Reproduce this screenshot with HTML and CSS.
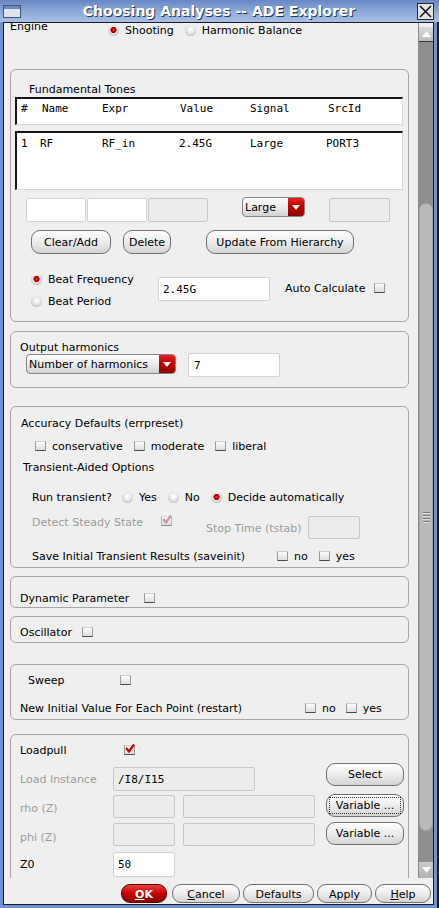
FILE: index.html
```html
<!DOCTYPE html>
<html lang="en">
<head>
<meta charset="utf-8">
<title>Choosing Analyses -- ADE Explorer</title>
<link rel="stylesheet" href="styles.css">
</head>
<body>
<div class="window">
  <header class="titlebar">
    <svg class="win-icon" width="18" height="13" viewBox="0 0 18 13"><rect x="0.5" y="0.5" width="17" height="12" fill="#dfe3ea" stroke="#46556f"/><rect x="1" y="1" width="16" height="3" fill="#6d8cc6"/></svg>
    <div class="title">Choosing Analyses -- ADE Explorer</div>
    <svg class="win-close" width="17" height="17" viewBox="0 0 17 17"><rect x="0.5" y="0.5" width="16" height="16" fill="#e2e2e2" stroke="#2a2a2a"/><path d="M3 3 L14 14 M14 3 L3 14" stroke="#111" stroke-width="1.5"/></svg>
  </header>
  <div class="frame"><div class="frame-inner"><div class="client">
    <div class="main">
      <div class="viewport">
        <div class="engine-row">
          <span class="engine-label">Engine</span>
          <span class="opt eng-opt"><span class="rb on"></span>Shooting</span>
          <span class="opt eng-opt gap11"><span class="rb"></span>Harmonic Balance</span>
        </div>

        <section class="box s1">
          <div class="tones-label">Fundamental Tones</div>
          <div class="tbl tbl-head"><div class="tr th"><span>#</span><span>Name</span><span>Expr</span><span>Value</span><span>Signal</span><span>SrcId</span></div></div>
          <div class="tbl tbl-body"><div class="tr td"><span>1</span><span>RF</span><span>RF_in</span><span>2.45G</span><span>Large</span><span>PORT3</span></div></div>
          <div class="field-row">
            <div class="in f1"></div><div class="in f2"></div><div class="in gray f3"></div>
            <div class="combo combo-large"><span class="combo-text">Large</span><span class="combo-btn"><svg width="8" height="5" viewBox="0 0 8 5"><path d="M0 0 H8 L4 5 Z" fill="#fff"/></svg></span></div>
            <div class="in gray f4"></div>
          </div>
          <div class="btn-row">
            <div class="btn b-clear">Clear/Add</div>
            <div class="btn b-delete">Delete</div>
            <div class="btn b-update">Update From Hierarchy</div>
          </div>
          <div class="beat">
            <div class="beat-opts">
              <div class="opt"><span class="rb on"></span>Beat Frequency</div>
              <div class="opt"><span class="rb"></span>Beat Period</div>
            </div>
            <div class="in mono beat-in">2.45G</div>
            <div class="opt auto"><span class="auto-label">Auto Calculate</span><span class="cb"></span></div>
          </div>
        </section>

        <section class="box s2">
          <div class="s2-label">Output harmonics</div>
          <div class="s2-row">
            <div class="combo combo-harm"><span class="combo-text">Number of harmonics</span><span class="combo-btn"><svg width="8" height="5" viewBox="0 0 8 5"><path d="M0 0 H8 L4 5 Z" fill="#fff"/></svg></span></div>
            <div class="in mono harm-in">7</div>
          </div>
        </section>

        <section class="box s3">
          <div class="line acc-label">Accuracy Defaults (errpreset)</div>
          <div class="line opt acc-row">
            <span class="cbl"><span class="cb"></span>conservative</span>
            <span class="cbl gap11"><span class="cb"></span>moderate</span>
            <span class="cbl gap11"><span class="cb"></span>liberal</span>
          </div>
          <div class="line tao-label">Transient-Aided Options</div>
          <div class="line opt run-row">
            <span class="run-label">Run transient?</span>
            <span class="opt"><span class="rb"></span>Yes</span>
            <span class="opt gap11"><span class="rb"></span>No</span>
            <span class="opt gap11"><span class="rb on"></span>Decide automatically</span>
          </div>
          <div class="detect-row">
            <span class="line dis-text detect-label">Detect Steady State</span>
            <span class="cb chk dis detect-cb"><svg width="11" height="10" viewBox="0 0 11 10"><path d="M2 4 L5 7.5 L10 0.5" fill="none" stroke="#c79a9a" stroke-width="2.2"/></svg></span>
            <span class="line dis-text stop-label">Stop Time (tstab)</span>
            <span class="in gray stop-in"></span>
          </div>
          <div class="line opt save-row">
            <span class="save-label">Save Initial Transient Results (saveinit)</span>
            <span class="cbl"><span class="cb"></span>no</span>
            <span class="cbl gap11"><span class="cb"></span>yes</span>
          </div>
        </section>

        <section class="box s4">
          <div class="line opt dyn-row"><span class="dyn-label">Dynamic Parameter</span><span class="cb"></span></div>
        </section>

        <section class="box s5">
          <div class="line opt osc-row"><span class="osc-label">Oscillator</span><span class="cb"></span></div>
        </section>

        <section class="box s6">
          <div class="line opt sweep-row"><span class="sweep-label">Sweep</span><span class="cb"></span></div>
          <div class="line opt restart-row">
            <span class="restart-label">New Initial Value For Each Point (restart)</span>
            <span class="cbl"><span class="cb"></span>no</span>
            <span class="cbl gap10"><span class="cb"></span>yes</span>
          </div>
        </section>

        <section class="box s7">
          <div class="line opt lp-head"><span class="lp-title">Loadpull</span><span class="cb chk"><svg width="11" height="10" viewBox="0 0 11 10"><path d="M2 4 L5 7.5 L10 0.5" fill="none" stroke="#cc0000" stroke-width="2.2"/></svg></span></div>
          <div class="lp-row r1">
            <span class="lp-label dis-text">Load Instance</span>
            <span class="in gray mono inst-in">/I8/I15</span>
            <div class="btn lp-btn sel-btn">Select</div>
          </div>
          <div class="lp-row r2">
            <span class="lp-label dis-text">rho (Z)</span>
            <span class="in gray small-in"></span>
            <span class="in gray wide-in"></span>
            <div class="btn lp-btn focus"><span>Variable ...</span></div>
          </div>
          <div class="lp-row r3">
            <span class="lp-label dis-text">phi (Z)</span>
            <span class="in gray small-in"></span>
            <span class="in gray wide-in"></span>
            <div class="btn lp-btn">Variable ...</div>
          </div>
          <div class="lp-row r4">
            <span class="lp-label">Z0</span>
            <span class="in mono z0-in">50</span>
          </div>
        </section>
      </div>
      <div class="scrollbar">
        <div class="sb-pad"></div>
        <div class="sb-up"><svg width="9" height="6" viewBox="0 0 9 6"><path d="M0 6 H9 L4.5 0 Z" fill="#fff"/></svg></div>
        <div class="sb-track">
          <div class="sb-thumb"><div class="grip"></div></div>
        </div>
        <div class="sb-down"><svg width="9" height="6" viewBox="0 0 9 6"><path d="M0 0 H9 L4.5 6 Z" fill="#fff"/></svg></div>
      </div>
    </div>
    <div class="buttonbar">
      <div class="btn bb ok"><span class="ul">O</span>K</div>
      <div class="btn bb cancel"><span class="ul">C</span>ancel</div>
      <div class="btn bb defaults">Defaults</div>
      <div class="btn bb apply">Apply</div>
      <div class="btn bb help"><span class="ul">H</span>elp</div>
    </div>
  </div></div></div>
</div>
</body>
</html>
```

FILE: styles.css
```css
* { box-sizing: border-box; }
html, body { margin: 0; padding: 0; }
body {
  font-family: "DejaVu Sans", "Liberation Sans", sans-serif;
  font-size: 11px;
  color: #000;
  background: #efefef;
}
.window {
  width: 439px;
  height: 908px;
  display: flex;
  flex-direction: column;
  overflow: hidden;
  background: #efefef;
}

/* title bar */
.titlebar {
  flex: none;
  height: 22px;
  display: flex;
  align-items: center;
  padding: 0 5px 0 3px;
  background: linear-gradient(#6886c2, #8ca8d8 50%, #a8bfe4);
}
.win-icon, .win-close { flex: none; display: block; }
.title {
  flex: 1;
  text-align: center;
  color: #fff;
  font-weight: bold;
  font-size: 14px;
  line-height: 22px;
  text-shadow: 1px 1px 0 #27375c;
  white-space: nowrap;
}

/* frame */
.frame {
  flex: 1;
  display: flex;
  min-height: 0;
  border-left: 3px solid #7093cf;
  border-right: 2px solid #1c1c1c;
}
.frame-inner {
  flex: 1;
  display: flex;
  min-width: 0;
  border-right: 3px solid #7093cf;
  border-bottom: 3px solid #7093cf;
}
.client {
  flex: 1;
  display: flex;
  flex-direction: column;
  min-width: 0;
  border: 1px solid #1c1c1c;
  background: #efefef;
}
.main { flex: none; height: 855px; display: flex; }
.viewport { flex: none; width: 414px; height: 855px; overflow: hidden; }

/* scrollbar */
.scrollbar {
  flex: none;
  width: 15px;
  display: flex;
  flex-direction: column;
  border-left: 1px solid #8a8a8a;
}
.sb-pad { flex: none; height: 4px; background: #efefef; }
.sb-up {
  flex: none;
  height: 15px;
  border-bottom: 1px solid #3a3a3a;
  background: linear-gradient(#dadada, #bcbcbc);
  display: flex;
  align-items: center;
  justify-content: center;
}
.sb-track { flex: 1; background: #8e8e8e; display: flex; flex-direction: column; }
.sb-thumb {
  flex: none;
  margin-top: 161px;
  height: 628px;
  border-radius: 7px;
  background: #b9b9b9;
  border: 1px solid #a4a4a4;
  display: flex;
  align-items: center;
  justify-content: center;
}
.grip {
  width: 7px;
  height: 11px;
  background: repeating-linear-gradient(#7c7c7c 0 1px, #dcdcdc 1px 2px, #b9b9b9 2px 3px);
}
.sb-down {
  flex: none;
  height: 16px;
  background: linear-gradient(#cbcbcb, #b2b2b2);
  display: flex;
  align-items: center;
  justify-content: center;
}

/* generic controls */
.line { line-height: 16px; height: 16px; }
.opt { display: flex; align-items: center; line-height: 16px; white-space: nowrap; }
.gap11 { margin-left: 11px; }
.gap10 { margin-left: 10px; }
.rb {
  flex: none;
  width: 11px;
  height: 11px;
  border-radius: 50%;
  margin-right: 6px;
  margin-bottom: 1px;
  background: radial-gradient(circle at 50% 40%, #ffffff 0, #ececec 40%, #c4c4c4 75%, #9a9a9a 100%);
}
.rb.on {
  background:
    radial-gradient(circle at 50% 45%, #ff3a3a 0, #d40000 1.6px, #a80000 2.8px, rgba(255,255,255,0) 3.4px),
    radial-gradient(circle at 50% 40%, #ffffff 0, #ececec 40%, #c4c4c4 75%, #9a9a9a 100%);
}
.cb {
  flex: none;
  width: 11px;
  height: 10px;
  margin-bottom: 3px;
  border: 1px solid;
  border-color: #cfcfcf #9c9c9c #4a4a4a #9c9c9c;
  background: linear-gradient(#fbfbfb, #dedede);
  display: flex;
  overflow: visible;
}
.cb svg { display: block; margin: -2px 0 0 -1px; overflow: visible; }
.cb.dis { border-color: #dadada #b8b8b8 #8c8c8c #b8b8b8; }
.cbl { display: flex; align-items: center; }
.cbl .cb { margin-right: 6px; }
.dis-text { color: #9b9b9b; }

.in {
  flex: none;
  display: block;
  height: 24px;
  background: #fff;
  border: 1px solid #d3d3d3;
  border-radius: 2px;
}
.in.gray { background: #ececec; border-color: #c7c7c7; }
.mono {
  font-family: "DejaVu Sans Mono", "Liberation Mono", monospace;
  font-size: 11px;
  display: flex;
  align-items: center;
  padding-left: 4px;
}

.combo {
  flex: none;
  display: flex;
  height: 20px;
  border: 1px solid #868686;
  border-radius: 4px;
  overflow: hidden;
  background: linear-gradient(#fdfdfd, #ececec 50%, #d2d2d2);
}
.combo-text { flex: 1; padding-left: 2px; line-height: 19px; white-space: nowrap; }
.combo-btn {
  flex: none;
  width: 16px;
  background: linear-gradient(#e42020, #bf0000 50%, #8c0000);
  display: flex;
  align-items: center;
  justify-content: center;
}

.btn {
  flex: none;
  display: flex;
  align-items: center;
  justify-content: center;
  height: 23px;
  border: 1px solid #717171;
  border-radius: 9px;
  background: linear-gradient(#ffffff, #eeeeee 45%, #d4d4d4);
  color: #000;
  white-space: nowrap;
}
.btn.focus > span {
  flex: 1;
  align-self: stretch;
  margin: 2px;
  border: 1px dotted #333;
  display: flex;
  align-items: center;
  justify-content: center;
}

/* engine row */
.engine-row { height: 46px; display: flex; align-items: flex-start; }
.engine-label { margin: -4px 0 0 6px; width: 98px; line-height: 16px; }
.eng-opt { margin-top: 0; }

/* sections */
.box {
  margin: 0 9px 0 6px;
  border: 1px solid #a6a6a6;
  border-radius: 6px;
}
.s1 { height: 253px; }
.s2 { margin-top: 9px; height: 57px; }
.s3 { margin-top: 18px; height: 162px; }
.s4 { margin-top: 8px; height: 32px; }
.s5 { margin-top: 8px; height: 27px; }
.s6 { margin-top: 21px; height: 56px; }
.s7 { margin-top: 14px; height: 200px; }

/* section 1 */
.tones-label { margin: 12px 0 0 18px; line-height: 16px; height: 15px; }
.tbl {
  margin: 0 5px 0 4px;
  background: #fff;
  border-top: 2px solid #161616;
  border-left: 2px solid #161616;
  border-right: 1px solid #d6d6d6;
  border-bottom: 1px solid #d6d6d6;
  font-family: "DejaVu Sans Mono", "Liberation Mono", monospace;
  font-size: 11px;
}
.tbl-head { height: 28px; }
.tbl-body { margin-top: 6px; height: 59px; }
.tr { display: grid; line-height: 14px; padding-left: 4px; }
.th { grid-template-columns: 21px 60px 78px 70px 78px 1fr; padding-top: 3px; }
.td { grid-template-columns: 19px 62px 77px 71px 76px 1fr; padding-top: 4px; }

.field-row { margin-top: 8px; height: 24px; display: flex; align-items: flex-start; padding-left: 15px; }
.f1 { width: 60px; }
.f2 { width: 60px; margin-left: 1px; }
.f3 { width: 60px; margin-left: 1px; }
.combo-large { width: 63px; margin: -1px 0 0 34px; }
.f4 { width: 61px; margin-left: 24px; }

.btn-row { margin-top: 8px; height: 24px; display: flex; align-items: flex-start; padding-left: 20px; }
.btn-row .btn { height: 24px; }
.b-clear { width: 80px; }
.b-delete { width: 48px; margin-left: 12px; }
.b-update { width: 148px; margin-left: 35px; }

.beat { margin-top: 17px; display: flex; align-items: flex-start; padding-left: 20px; }
.beat-opts { width: 127px; display: flex; flex-direction: column; gap: 6px; padding-top: 1px; }
.beat-in { width: 112px; margin-top: 6px; }
.auto { margin: 10px 0 0 15px; }
.auto-label { width: 89px; }

/* section 2 */
.s2-label { margin: 9px 0 0 9px; line-height: 14px; height: 12px; }
.s2-row { display: flex; align-items: flex-start; }
.combo-harm { width: 150px; margin: 1px 0 0 15px; }
.harm-in { width: 92px; margin-left: 12px; padding-left: 5px; }

/* section 3 */
.acc-label { margin: 9px 0 0 10px; }
.acc-row { margin-top: 7px; padding-left: 24px; }
.tao-label { margin: 5px 0 0 12px; }
.run-row { margin-top: 14px; padding-left: 21px; }
.run-label { width: 90px; }
.detect-row { margin-top: 8px; height: 25px; display: flex; align-items: flex-start; padding-left: 21px; }
.detect-label { width: 129px; margin-top: 1px; }
.detect-cb { margin-top: 2px; }
.stop-label { margin: 7px 0 0 34px; width: 102px; }
.stop-in { width: 52px; height: 23px; margin-top: 2px; }
.save-row { margin-top: 10px; padding-left: 21px; }
.save-label { width: 245px; }

/* sections 4-6 */
.dyn-row { margin-top: 14px; padding-left: 9px; }
.dyn-label { width: 124px; }
.osc-row { margin-top: 8px; padding-left: 9px; }
.osc-label { width: 62px; }
.sweep-row { margin-top: 8px; padding-left: 17px; }
.sweep-label { width: 92px; }
.restart-row { margin-top: 12px; padding-left: 9px; }
.restart-label { width: 285px; }

/* loadpull */
.lp-head { margin-top: 8px; padding-left: 9px; }
.lp-title { width: 104px; }
.lp-row { display: flex; align-items: flex-start; padding-left: 9px; }
.lp-label { width: 93px; line-height: 16px; margin-top: 7px; }
.r1 { margin-top: 4px; }
.r1 .lp-label { margin-top: 9px; }
.inst-in { width: 142px; margin-top: 4px; }
.sel-btn { margin-left: 71px; }
.r2 { margin-top: 3px; }
.r3 { margin-top: 4px; }
.r3 .lp-label { margin-top: 8px; }
.small-in { width: 62px; height: 23px; margin-top: 1px; }
.wide-in { width: 132px; height: 23px; margin: 1px 0 0 8px; }
.lp-btn { width: 78px; }
.r2 .lp-btn, .r3 .lp-btn { margin-left: 11px; }
.r4 { margin-top: 5px; }
.r4 .lp-label { margin-top: 6px; }
.z0-in { width: 62px; height: 25px; margin-top: 1px; }

/* bottom bar */
.buttonbar {
  flex: none;
  height: 26px;
  display: flex;
  justify-content: flex-end;
  align-items: flex-start;
  padding: 6px 2px 0 0;
  gap: 3px;
}
.bb { height: 19px; padding-top: 2px; }
.ul { text-decoration: underline; }
.ok {
  width: 46px;
  margin-right: 2px;
  background: linear-gradient(#e84040, #c40000 50%, #8c0000);
  border-color: #5e0000;
  color: #fff;
  font-weight: bold;
}
.cancel { width: 68px; }
.defaults { width: 71px; }
.apply { width: 55px; }
.help { width: 56px; }
```
